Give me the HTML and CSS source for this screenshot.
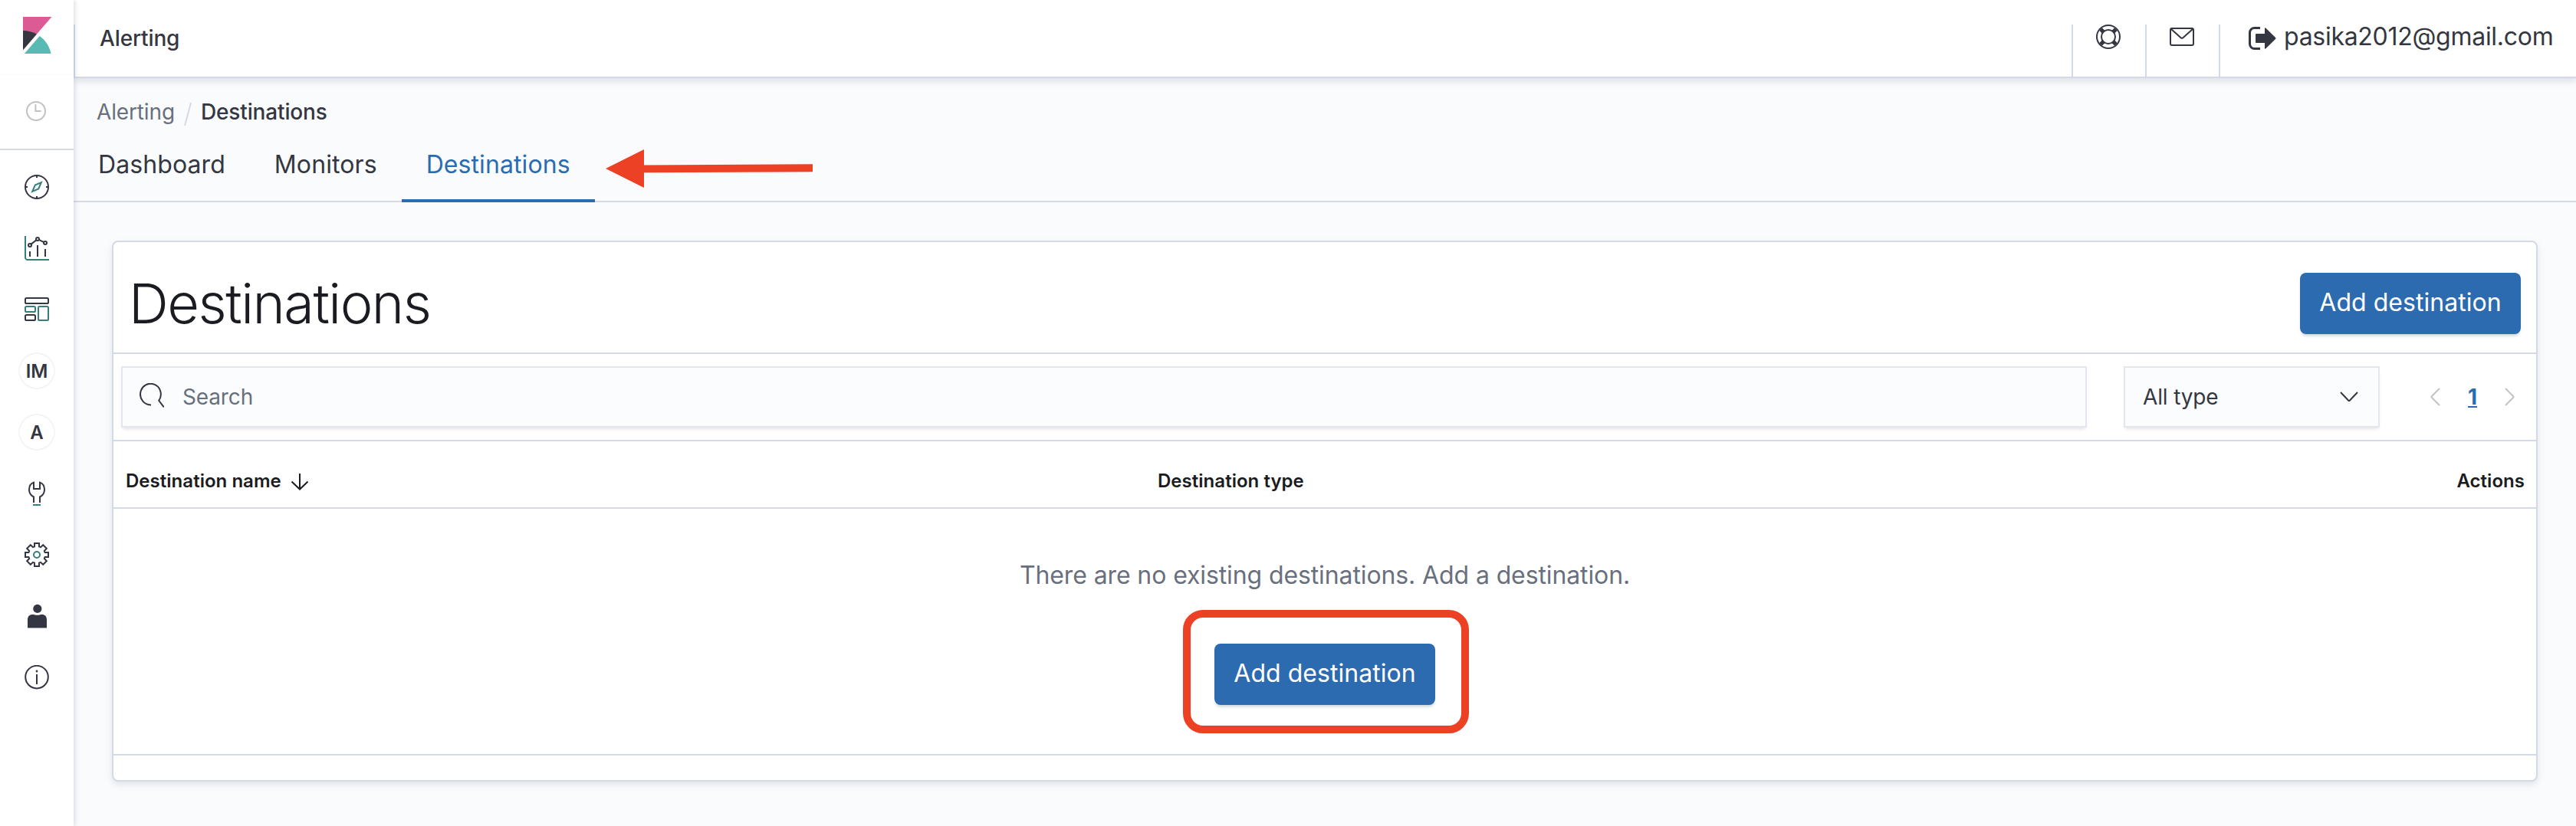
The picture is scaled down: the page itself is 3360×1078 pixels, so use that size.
FILE: index.html
```
<!DOCTYPE html>
<html lang="en">
<head>
<meta charset="utf-8">
<title>Alerting - Destinations</title>
<link rel="stylesheet" href="styles.css">
</head>
<body>
<div class="app">
  <nav class="sidebar">
    <div class="brand">
      <svg width="48" height="48" viewBox="0 0 32 32"><path fill="#dd5b95" d="M4 0v28.789L28.935.017z"/><path fill="#353740" d="M4 12v16.789l11.906-13.738A24.721 24.721 0 0 0 4 12"/><path fill="#57bab3" d="M18.479 16.664L6.268 30.754l-1.073 1.237h23.191c-1.252-6.292-4.883-11.719-9.908-15.327"/></svg>
    </div>
    <div class="recent">
      <svg class="clock" width="32" height="32" viewBox="0 0 16 16" fill="none" stroke="#343741"><circle cx="8" cy="8" r="6"/><path d="M7.7 3.600v4.400h3.600"/></svg>
    </div>
    <ul class="nav-list">
      <li><svg class="icon" viewBox="0 0 16 16"><circle cx="8" cy="8" r="7.500"/><path d="M8 .5V2M8 14v1.500M.5 8H2M14 8h1.500"/><path class="accent" d="M10.900 5.100L6.900 6.800 5.100 10.900 9.100 9.200z"/></svg></li>
      <li><svg class="icon" viewBox="0 0 16 16"><path class="accent" d="M.5 0v14a1.500 1.500 0 0 0 1.500 1.500h14"/><path d="M3.500 10v3.500M8.500 6v7.500M13.500 8.500v5M4.300 5.300l3.400-2.700M9.400 2.400l3.200 1.700"/><circle cx="3.500" cy="6" r="1"/><circle cx="8.500" cy="2" r="1"/><circle cx="13.500" cy="4.500" r="1"/></svg></li>
      <li><svg class="icon" viewBox="0 0 16 16"><rect x=".5" y=".5" width="15" height="3.500" rx=".8"/><rect class="accent" x=".5" y="6" width="6.500" height="3.500" rx=".8"/><rect class="accent" x="9" y="6" width="6.500" height="9" rx=".8"/><rect x=".5" y="11.500" width="6.500" height="3.500" rx=".8"/></svg></li>
      <li><span class="avatar">IM</span></li>
      <li><span class="avatar">A</span></li>
      <li><svg class="icon" viewBox="0 0 16 16"><path d="M6 14v-3.800C4 9.300 3 7.700 3 5.500 3 3.400 4.100 1.500 6 .8V5h4V.8c1.900.7 3 2.600 3 4.700 0 2.200-1 3.800-3 4.700V14"/><path class="accent" d="M5.500 15.500h5"/></svg></li>
      <li><svg class="icon" viewBox="0 0 16 16"><path d="M6.500 2.700V.5h3v2.200l1 .4 1.600-1.500 2.300 2.300-1.500 1.600.4 1h2.200v3h-2.200l-.4 1 1.500 1.600-2.300 2.300-1.600-1.500-1 .4v2.200h-3v-2.200l-1-.4-1.600 1.500-2.300-2.300 1.500-1.600-.4-1H.5v-3h2.200l.4-1-1.500-1.600 2.300-2.300 1.600 1.500z"/><circle class="accent" cx="8" cy="8" r="2"/></svg></li>
      <li><svg class="icon solid" viewBox="0 0 16 16"><circle cx="8.400" cy="3.200" r="2.800"/><path d="M2 15.700V10.500C2 8.300 3.300 7 5.300 7c1 0 1.800.4 3 .4S10.400 7 11.300 7c2 0 3.200 1.300 3.200 3.500v5.200z"/></svg></li>
      <li><svg class="icon" viewBox="0 0 16 16"><circle cx="8" cy="7.800" r="7.400"/><path d="M8 6v6.500"/><circle class="dot" cx="8" cy="4" r=".7"/></svg></li>
    </ul>
  </nav>
  <div class="main">
    <header class="topbar">
      <div class="topbar-title">Alerting</div>
      <div class="topbar-cell">
        <svg class="icon" viewBox="0 0 16 16"><circle cx="8" cy="8" r="7.500"/><circle cx="8" cy="8" r="4.500"/><path class="thick" d="M3 3l1.900 1.900M13 3l-1.900 1.900M3 13l1.900-1.900M13 13l-1.900-1.900"/></svg>
      </div>
      <div class="topbar-cell">
        <svg class="icon" viewBox="0 0 16 16"><rect x=".5" y="2.500" width="15" height="11" rx="1"/><path d="M1 3l6.300 5.600q.7.600 1.400 0L15 3"/></svg>
      </div>
      <div class="topbar-user">
        <svg width="36" height="30" viewBox="0 0 36 30"><path d="M15 1.500H7.500a6 6 0 0 0-6 6v15a6 6 0 0 0 6 6H15" fill="none" stroke="#343741" stroke-width="3"/><path fill="#343741" d="M9 10q0-1 1-1h11V2.500q0-2 1.500-.8L35 14q1 1 0 2L22.500 28.200q-1.500 1.200-1.500-.8V21H10q-1 0-1-1z"/></svg>
        <span>pasika2012@gmail.com</span>
      </div>
    </header>
    <div class="crumbs"><span class="crumb-link">Alerting</span><svg class="slash" width="10" height="32" viewBox="0 0 10 32"><path d="M9 1L1 31" stroke="#d3dae6" stroke-width="2"/></svg><span class="crumb-now">Destinations</span></div>
    <div class="tabs">
      <div class="tab">Dashboard</div>
      <div class="tab">Monitors</div>
      <div class="tab active">Destinations</div>
      <svg class="arrow" width="270" height="50" viewBox="0 0 270 50"><path fill="#ec4125" d="M0 25L50 0v20.400l220-1.100v9.900l-220 1.100V50z"/></svg>
    </div>
    <section class="panel">
      <div class="panel-head">
        <h1>Destinations</h1>
        <button class="btn">Add destination</button>
      </div>
      <div class="filters">
        <div class="field search">
          <svg class="icon" viewBox="0 0 16 16"><path d="M7.500 14.200A6.700 6.900 0 1 1 12.600 11.400L15.900 15.700"/></svg>
          <span>Search</span>
        </div>
        <div class="field select"><span>All type</span><svg width="24" height="14" viewBox="0 0 24 14" fill="none" stroke="#343741" stroke-width="2"><path d="M1 1l10 10.500q1 1 2 0L23 1"/></svg></div>
        <div class="pager">
          <svg width="13" height="24" viewBox="0 0 13 24"><path d="M12 1L2 11q-1 1 0 2l10 10"/></svg>
          <span class="page">1</span>
          <svg width="13" height="24" viewBox="0 0 13 24"><path d="M1 1l10 10q1 1 0 2L1 23"/></svg>
        </div>
      </div>
      <div class="thead">
        <div class="th name"><span>Destination name</span><svg width="24" height="22" viewBox="0 0 24 22" fill="none" stroke="#1a1c21" stroke-width="2"><path d="M12 0v20M1.500 10.500L12 20.500l10.500-10"/></svg></div>
        <div class="th type">Destination type</div>
        <div class="th">Actions</div>
      </div>
      <div class="empty">
        <p>There are no existing destinations. Add a destination.</p>
        <div class="callout"><button class="btn">Add destination</button></div>
      </div>
    </section>
  </div>
</div>
</body>
</html>
```
FILE: styles.css
```
* { box-sizing: border-box; }

body {
  margin: 0;
  background: #fafbfd;
  color: #343741;
  font-family: Inter, "Liberation Sans", sans-serif;
  font-size: 28px;
  letter-spacing: -0.005em;
}

.app { display: flex; height: 1078px; overflow: hidden; }

.sidebar {
  position: relative;
  z-index: 1;
  flex: none;
  width: 96px;
  background: #fff;
  box-shadow: 2px 0 6px rgba(152, 162, 179, 0.35);
}

.brand { height: 98px; padding: 22px 24px 0; border-bottom: 2px solid #fcfcfd; }

.recent { height: 98px; padding: 31px 0 0 31px; border-bottom: 2px solid #d3dae6; }
.clock { display: block; opacity: 0.3; }

.nav-list { margin: 0; padding: 8px 0 0; list-style: none; }
.nav-list li { display: flex; align-items: center; justify-content: center; height: 80px; }

.icon {
  display: block;
  flex: none;
  width: 32px;
  height: 32px;
  fill: none;
  stroke: #343741;
  stroke-width: 1;
}
.icon .accent { stroke: #357f78; }
.icon .dot { fill: #343741; stroke: none; }
.icon .thick { stroke-width: 2.6; }
.icon.solid { fill: #343741; stroke: none; }

.avatar {
  display: flex;
  align-items: center;
  justify-content: center;
  width: 48px;
  height: 48px;
  border: 2px solid #f5f5f5;
  border-radius: 50%;
  font-size: 24px;
  font-weight: 600;
}

.main { flex: 1; min-width: 0; }

.topbar {
  display: flex;
  height: 102px;
  padding-top: 32px;
  background: #fff;
  border-bottom: 2px solid #d3dae6;
  box-shadow: 0 4px 8px rgba(152, 162, 179, 0.3);
}
.topbar-title {
  flex: 1;
  padding-left: 32px;
  border-left: 2px solid #d3dae6;
  font-weight: 500;
  line-height: 36px;
}
.topbar-cell { width: 96px; padding-left: 30px; border-left: 2px solid #d3dae6; }
.topbar-user {
  display: flex;
  width: 466px;
  padding-left: 37px;
  border-left: 2px solid #d3dae6;
  font-size: 32px;
  line-height: 32px;
  letter-spacing: -0.28px;
}
.topbar-user svg { margin: 3px 10px 0 0; flex: none; }

.crumbs { display: flex; height: 80px; padding: 26px 0 0 30px; line-height: 36px; }
.crumb-link { color: #69707d; }
.crumb-now { font-weight: 500; }
.slash { margin: 5px 12px 0 12px; }

.tabs {
  position: relative;
  display: flex;
  height: 82px;
  border-bottom: 2px solid #d3dae6;
  font-size: 32px;
  letter-spacing: 0.09px;
}
.tab { height: 82px; padding: 13px 32px 0; line-height: 40px; }
.tab.active { color: #2b6cb0; border-bottom: 4px solid #2c6bb0; }
.arrow { position: absolute; left: 694px; top: 13px; }

.panel {
  height: 706px;
  margin: 50px 50px 0;
  background: #fff;
  border: 2px solid #d3dae6;
  border-radius: 8px;
  box-shadow: 0 4px 8px rgba(152, 162, 179, 0.25);
}
.panel-head {
  display: flex;
  justify-content: space-between;
  height: 146px;
  padding: 40px 20px 0;
  border-bottom: 2px solid #d3dae6;
}
h1 {
  margin: 0;
  color: #1a1c21;
  font-size: 72px;
  font-weight: 300;
  line-height: 80px;
  letter-spacing: -1.5px;
}

.btn {
  display: block;
  width: 288px;
  height: 80px;
  padding: 0 0 3px;
  border: 0;
  border-radius: 8px;
  background: #2c6bb0;
  box-shadow: 0 4px 4px -2px rgba(54, 97, 126, 0.3);
  color: #fff;
  font: inherit;
  font-size: 32px;
  letter-spacing: 0.04px;
}

.filters { display: flex; height: 114px; padding: 16px 28px 0 10px; border-bottom: 2px solid #d3dae6; }
.field {
  display: flex;
  height: 80px;
  background: #fbfcfd;
  border: 2px solid #e3e6ef;
  box-shadow: 0 4px 4px -2px rgba(152, 162, 179, 0.3);
  line-height: 76px;
}
.search { width: 2564px; margin-right: 48px; padding-left: 22px; color: #69707d; }
.search .icon { margin: 20px 24px 0 0; }
.select { width: 334px; padding: 0 26px 0 23px; align-items: center; justify-content: space-between; }
.pager { display: flex; flex: 1; align-items: center; justify-content: space-between; height: 80px; padding-left: 66px; }
.pager svg { fill: none; stroke: #c2c3c6; stroke-width: 2; }
.page { color: #2c6bb0; font-weight: 700; text-decoration: underline; }

.thead {
  display: flex;
  height: 88px;
  padding: 0 15px 0 16px;
  border-bottom: 2px solid #d3dae6;
  color: #1a1c21;
  font-size: 24px;
  font-weight: 600;
  line-height: 36px;
  letter-spacing: 0.03px;
}
.th { padding-top: 34px; }
.name { display: flex; width: 1346px; }
.name svg { margin: 8px 0 0 12px; }
.type { flex: 1; }

.empty {
  height: 322px;
  padding-top: 67px;
  border-bottom: 2px solid #d3dae6;
  color: #69707d;
  font-size: 32px;
  letter-spacing: -0.11px;
  text-align: center;
}
.empty p { margin: 0; line-height: 40px; }
.callout {
  width: 373px;
  height: 161px;
  margin: 25px 0 0 1395px;
  padding: 34px 0 0 31px;
  border: 10px solid #ec4125;
  border-radius: 26px;
}
```
